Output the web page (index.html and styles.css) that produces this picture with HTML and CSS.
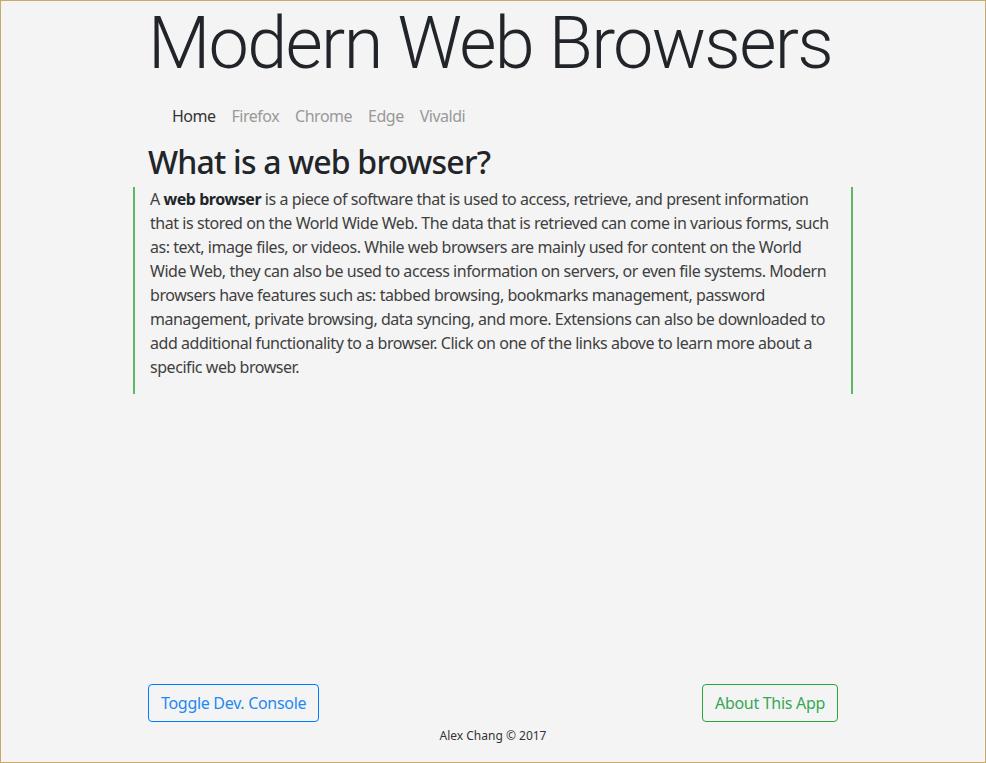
FILE: index.html
```html
<!DOCTYPE html>
<html lang="en">
<head>
<meta charset="utf-8">
<title>Modern Web Browsers</title>
<link rel="stylesheet" href="styles.css">
</head>
<body>
<div class="window">
  <main class="container main">
    <h1 class="title">Modern Web Browsers</h1>
    <nav class="nav">
      <a class="nav-link active" href="#">Home</a>
      <a class="nav-link" href="#">Firefox</a>
      <a class="nav-link" href="#">Chrome</a>
      <a class="nav-link" href="#">Edge</a>
      <a class="nav-link" href="#">Vivaldi</a>
    </nav>
    <h2 class="heading">What is a web browser?</h2>
    <div class="quote">
      <p>A <strong>web browser</strong> is a piece of software that is used to access, retrieve, and present information that is stored on the World Wide Web. The data that is retrieved can come in various forms, such as: text, image files, or videos. While web browsers are mainly used for content on the World Wide Web, they can also be used to access information on servers, or even file systems. Modern browsers have features such as: tabbed browsing, bookmarks management, password management, private browsing, data syncing, and more. Extensions can also be downloaded to add additional functionality to a browser. Click on one of the links above to learn more about a specific web browser.</p>
    </div>
  </main>
  <footer class="container footer">
    <div class="buttons">
      <button class="btn btn-blue">Toggle Dev. Console</button>
      <button class="btn btn-green">About This App</button>
    </div>
    <p class="credit">Alex Chang © 2017</p>
  </footer>
</div>
</body>
</html>
```
FILE: styles.css
```css
* { box-sizing: border-box; }
html, body { margin: 0; padding: 0; }
body {
  font-family: "Noto Sans", "Open Sans", sans-serif;
  color: #212529;
  background: #f4f4f4;
}
.window {
  height: 763px;
  border: 1px solid #c9aa6b;
  background: #f4f4f4;
  display: flex;
  flex-direction: column;
}
.container {
  width: 720px;
  margin: 0 auto;
  padding: 0 15px;
}
.main { flex: 1; }
.title {
  margin: 0;
  font-family: "Roboto", "Open Sans", sans-serif;
  font-size: 72px;
  font-weight: 300;
  line-height: 1.2;
  letter-spacing: -1.7px;
  white-space: nowrap;
}
.nav {
  display: flex;
  margin-top: 17px;
  padding-left: 16px;
}
.nav-link {
  padding: 0 8px;
  font-size: 16px;
  line-height: 24px;
  color: #999;
  text-decoration: none;
  letter-spacing: -0.5px;
}
.nav-link.active { color: #333; }
.heading {
  margin: 15px 0 0;
  font-size: 32px;
  font-weight: 500;
  line-height: 1.2;
  letter-spacing: -0.8px;
}
.quote {
  margin: 5px -15px 0;
  padding: 0 15px 15px 15px;
  border-left: 2px solid #5cb85c;
  border-right: 2px solid #5cb85c;
}
.quote p {
  margin: 0;
  font-size: 16px;
  line-height: 24px;
  color: #404040;
  letter-spacing: -0.45px;
}
.quote strong { color: #212529; }
.buttons {
  display: flex;
  justify-content: space-between;
}
.btn {
  font-family: inherit;
  font-size: 16px;
  line-height: 24px;
  padding: 6px 12px;
  border-radius: 4px;
  background: transparent;
  letter-spacing: -0.3px;
  cursor: pointer;
}
.btn-blue { color: #1e88f5; border: 1px solid #007bff; }
.btn-green { color: #34a853; border: 1px solid #28a745; }
.credit {
  margin: 6px 0 18px;
  text-align: center;
  font-size: 12px;
  line-height: 16px;
  color: #333;
}
```
